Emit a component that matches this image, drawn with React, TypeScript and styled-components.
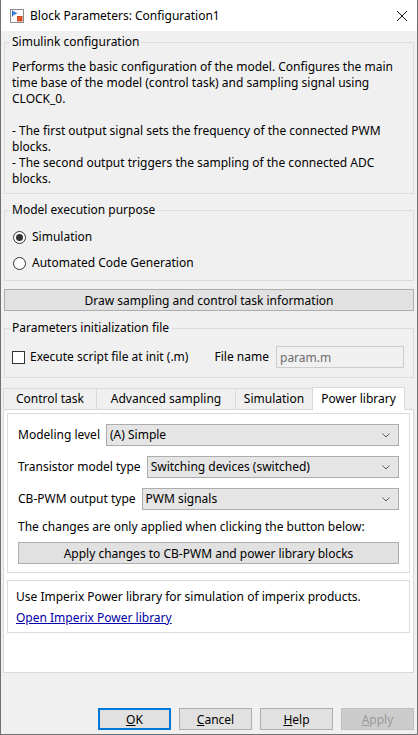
import React from 'react';
import styled, { createGlobalStyle } from 'styled-components';

const FONT = `"Noto Sans", "Open Sans", "DejaVu Sans", sans-serif`;
const FS = '12px';

const GlobalStyle = createGlobalStyle`
  * { box-sizing: border-box; }
  html, body { margin: 0; padding: 0; background: #f0f0f0; }
  body { font-family: ${FONT}; font-size: ${FS}; line-height: 16px; color: #000; }
  #root { width: 418px; height: 735px; }
`;

const Window = styled.div`
  width: 418px;
  height: 735px;
  display: flex;
  flex-direction: column;
  border: 1px solid #717171;
  border-top: none;
  background: #f0f0f0;
`;

const TitleBar = styled.div`
  flex: none;
  height: 31px;
  display: flex;
  align-items: center;
  padding: 0 10px 0 8px;
  background: #fff;
`;

const TitleText = styled.span`
  flex: 1;
  margin-left: 5px;
  font-size: ${FS};
  white-space: nowrap;
`;

const Body = styled.div`
  flex: 1;
  display: flex;
  flex-direction: column;
  padding: 3px 3px 4px 3px;
`;

const Group = styled.fieldset<{ $top?: number }>`
  margin: ${(p) => p.$top ?? 8}px 0 0;
  padding: 0;
  min-width: 0;
  border: 1px solid #dcdcdc;
`;

const Legend = styled.legend`
  margin-left: 5px;
  padding: 0 2px;
  line-height: 16px;
`;

const GroupBody = styled.div<{ $pad: string; $gap?: number }>`
  padding: ${(p) => p.$pad};
  display: flex;
  flex-direction: column;
  gap: ${(p) => p.$gap ?? 0}px;
`;

const Paragraph = styled.p`
  margin: 0;
  white-space: nowrap;
`;

const RadioRow = styled.label`
  display: flex;
  align-items: center;
  gap: 6px;
  height: 20px;
`;

const RadioCircle = styled.span<{ $checked?: boolean }>`
  flex: none;
  width: 13px;
  height: 13px;
  border-radius: 50%;
  border: 1px solid #333;
  background: #fff;
  display: flex;
  align-items: center;
  justify-content: center;
  &::after {
    content: '';
    width: 7px;
    height: 7px;
    border-radius: 50%;
    background: ${(p) => (p.$checked ? '#333' : 'transparent')};
  }
`;

const WideButton = styled.button<{ $top?: number }>`
  margin-top: ${(p) => p.$top ?? 0}px;
  height: 22px;
  width: 100%;
  border: 1px solid #adadad;
  background: #e1e1e1;
  font-family: ${FONT};
  font-size: ${FS};
  color: #000;
  padding: 0;
`;

const FileRow = styled.div`
  display: flex;
  align-items: center;
  height: 22px;
`;

const CheckBox = styled.span`
  flex: none;
  width: 13px;
  height: 13px;
  border: 1px solid #333;
  background: #fff;
  margin-right: 5px;
`;

const FileLabel = styled.span`
  margin-left: auto;
  margin-right: 7px;
`;

const FileInput = styled.input`
  width: 128px;
  height: 22px;
  border: 1px solid #cccccc;
  background: #f0f0f0;
  color: #6d6d6d;
  font-family: ${FONT};
  font-size: ${FS};
  padding: 0 3px;
  &:disabled {
    color: #6d6d6d;
  }
`;

const TabBar = styled.div`
  margin: 9px 0 0 -1px;
  height: 22px;
  display: flex;
  align-items: flex-end;
`;

const Tab = styled.div<{ $active?: boolean; $width: number }>`
  position: relative;
  z-index: ${(p) => (p.$active ? 1 : 0)};
  flex: none;
  width: ${(p) => p.$width}px;
  height: ${(p) => (p.$active ? 23 : 21)}px;
  margin-bottom: ${(p) => (p.$active ? -1 : 0)}px;
  margin-right: -1px;
  display: flex;
  align-items: center;
  justify-content: center;
  padding-bottom: ${(p) => (p.$active ? 1 : 0)}px;
  border: 1px solid #d9d9d9;
  border-bottom: none;
  background: ${(p) => (p.$active ? '#fff' : '#f0f0f0')};
  white-space: nowrap;
`;

const TabPanel = styled.div`
  margin-left: -1px;
  height: 264px;
  border: 1px solid #d9d9d9;
  background: #fff;
  padding: 3px;
  display: flex;
  flex-direction: column;
  gap: 7px;
`;

const PanelGroup = styled.div<{ $pad: string }>`
  border: 1px solid #dcdcdc;
  padding: ${(p) => p.$pad};
  display: flex;
  flex-direction: column;
`;

const ComboRow = styled.div<{ $top?: number }>`
  margin-top: ${(p) => p.$top ?? 0}px;
  display: flex;
  align-items: center;
  gap: 6px;
  height: 22px;
`;

const ComboLabel = styled.span`
  white-space: nowrap;
`;

const Combo = styled.div`
  flex: 1;
  height: 22px;
  border: 1px solid #adadad;
  background: #e5e5e5;
  display: flex;
  align-items: center;
  justify-content: space-between;
  padding: 0 8px 0 3px;
  white-space: nowrap;
`;

const TextLine = styled.div<{ $top?: number }>`
  margin-top: ${(p) => p.$top ?? 0}px;
  white-space: nowrap;
`;

const Link = styled.a`
  margin-top: 5px;
  color: #0000a8;
  text-decoration: underline;
  align-self: flex-start;
`;

const ButtonRow = styled.div`
  margin-top: auto;
  display: flex;
  justify-content: flex-end;
  gap: 8px;
`;

const DialogButton = styled.button<{ $variant?: 'default' | 'disabled' }>`
  width: 73px;
  height: 22px;
  padding: 0;
  font-family: ${FONT};
  font-size: ${FS};
  color: ${(p) => (p.$variant === 'disabled' ? '#9a9a9a' : '#000')};
  background: ${(p) => (p.$variant === 'disabled' ? '#cccccc' : '#e1e1e1')};
  border: ${(p) =>
    p.$variant === 'default'
      ? '2px solid #0078d7'
      : p.$variant === 'disabled'
      ? '1px solid #bfbfbf'
      : '1px solid #adadad'};
`;

const BlockIcon = () => (
  <svg width="16" height="16" viewBox="0 0 16 16">
    <rect x="1.5" y="1.5" width="13" height="13" fill="#fbfbfb" stroke="#8c8c8c" />
    <path d="M3.5 2.5v6" stroke="#2d6cc4" strokeWidth="1" />
    <path d="M4 3l4.5 2.2L4 7.4z" fill="#3b7dd8" />
    <rect x="8.5" y="8.5" width="4.5" height="4.5" fill="#e8561f" stroke="#b03b0f" strokeWidth="0.8" />
  </svg>
);

const CloseIcon = () => (
  <svg width="10" height="10" viewBox="0 0 10 10">
    <path d="M0 0L10 10M10 0L0 10" stroke="#111" strokeWidth="1" />
  </svg>
);

const Chevron = () => (
  <svg width="8" height="5" viewBox="0 0 8 5">
    <polyline points="0.5,0.5 4,4 7.5,0.5" fill="none" stroke="#606060" strokeWidth="1" />
  </svg>
);

const combos = [
  { label: 'Modeling level', value: '(A) Simple' },
  { label: 'Transistor model type', value: 'Switching devices (switched)' },
  { label: 'CB-PWM output type', value: 'PWM signals' },
];

const tabs = [
  { label: 'Control task', width: 94 },
  { label: 'Advanced sampling', width: 140 },
  { label: 'Simulation', width: 78 },
  { label: 'Power library', width: 93 },
];

export default function App() {
  return (
    <>
      <GlobalStyle />
      <Window>
        <TitleBar>
          <BlockIcon />
          <TitleText>Block Parameters: Configuration1</TitleText>
          <CloseIcon />
        </TitleBar>
        <Body>
          <Group $top={0}>
            <Legend>Simulink configuration</Legend>
            <GroupBody $pad="9px 7px 6px 7px">
              <Paragraph>
                Performs the basic configuration of the model. Configures the main
                <br />
                time base of the model (control task) and sampling signal using
                <br />
                CLOCK_0.
                <br />
                <br />
                - The first output signal sets the frequency of the connected PWM
                <br />
                blocks.
                <br />
                - The second output triggers the sampling of the connected ADC
                <br />
                blocks.
              </Paragraph>
            </GroupBody>
          </Group>

          <Group>
            <Legend>Model execution purpose</Legend>
            <GroupBody $pad="9px 8px 7px 8px" $gap={6}>
              <RadioRow>
                <RadioCircle $checked />
                Simulation
              </RadioRow>
              <RadioRow>
                <RadioCircle />
                Automated Code Generation
              </RadioRow>
            </GroupBody>
          </Group>

          <WideButton $top={8}>Draw sampling and control task information</WideButton>

          <Group $top={9}>
            <Legend>Parameters initialization file</Legend>
            <GroupBody $pad="10px 9px 9px 7px">
              <FileRow>
                <CheckBox />
                <span>Execute script file at init (.m)</span>
                <FileLabel>File name</FileLabel>
                <FileInput value="param.m" disabled readOnly />
              </FileRow>
            </GroupBody>
          </Group>

          <TabBar>
            {tabs.map((t) => (
              <Tab key={t.label} $width={t.width} $active={t.label === 'Power library'}>
                {t.label}
              </Tab>
            ))}
          </TabBar>
          <TabPanel>
            <PanelGroup $pad="10px 10px 8px 10px">
              {combos.map((c, i) => (
                <ComboRow key={c.label} $top={i === 0 ? 0 : 10}>
                  <ComboLabel>{c.label}</ComboLabel>
                  <Combo>
                    <span>{c.value}</span>
                    <Chevron />
                  </Combo>
                </ComboRow>
              ))}
              <TextLine $top={9}>The changes are only applied when clicking the button below:</TextLine>
              <WideButton $top={7}>Apply changes to CB-PWM and power library blocks</WideButton>
            </PanelGroup>
            <PanelGroup $pad="8px 8px 6px 8px">
              <TextLine>Use Imperix Power library for simulation of imperix products.</TextLine>
              <Link href="#">Open Imperix Power library</Link>
            </PanelGroup>
          </TabPanel>

          <ButtonRow>
            <DialogButton $variant="default">
              <u>O</u>K
            </DialogButton>
            <DialogButton>
              <u>C</u>ancel
            </DialogButton>
            <DialogButton>
              <u>H</u>elp
            </DialogButton>
            <DialogButton $variant="disabled">
              <u>A</u>pply
            </DialogButton>
          </ButtonRow>
        </Body>
      </Window>
    </>
  );
}
